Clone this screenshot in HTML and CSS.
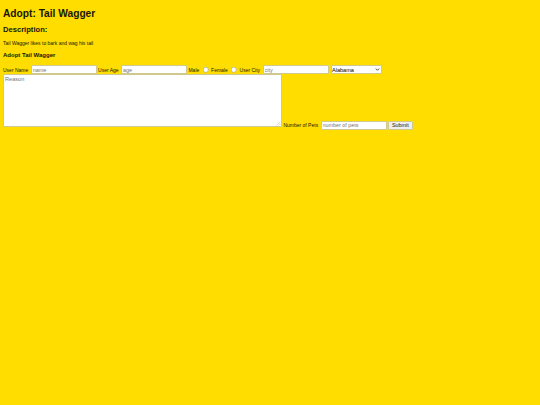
FILE: index.html
```html
<!DOCTYPE html>
<html lang="en">
  <head>
    <meta charset="UTF-8" />
    <meta name="viewport" content="width=device-width, initial-scale=1.0" />
    <title>Adopt: Tail Wagger</title>
    <link rel="stylesheet" href="styles.css">
  </head>
  <body>
    <h1>Adopt: Tail Wagger</h1>
    <h2>Description:</h2>
    <p>Tail Wagger likes to bark and wag his tail</p>
    <h3>Adopt Tail Wagger</h3>
    <form class="adopt-form">
      <div class="form-row">
        <label for="name">User Name</label>
        <input id="name" class="field" type="text" placeholder="name">
        <label for="age">User Age</label>
        <input id="age" class="field" type="text" placeholder="age">
        <label for="male">Male</label>
        <input id="male" class="radio" type="radio" name="gender">
        <label for="female">Female</label>
        <input id="female" class="radio" type="radio" name="gender">
        <label for="city">User City</label>
        <input id="city" class="field" type="text" placeholder="city">
        <span class="state-box">
          <select class="state">
            <option>Alabama</option>
            <option>Alaska</option>
          </select>
          <svg class="state-arrow" viewBox="0 0 6 4"><path d="M0.8 0.8 L3 3 L5.2 0.8" fill="none" stroke="#333" stroke-width="1.2"/></svg>
        </span>
      </div>
      <span class="reason-box">
        <textarea class="reason" placeholder="Reason"></textarea>
        <svg class="reason-grip" viewBox="0 0 5 5"><path d="M0.5 4.5 L4.5 0.5 M2.8 4.5 L4.5 2.8" fill="none" stroke="#b0ad9a" stroke-width="0.5"/></svg>
      </span>
      <label for="pets">Number of Pets</label>
      <input id="pets" class="field" type="text" placeholder="number of pets">
      <button class="submit-btn" type="button">Submit</button>
    </form>
  </body>
</html>
```

FILE: styles.css
```css
/*global*/
* {
  box-sizing: border-box;
}

body {
  margin: 3px;
  background-color: #ffdd00;
  font-family: "Liberation Sans", Arial, sans-serif;
  color: #1a1600;
}

/*headings*/
h1 {
  margin: 5px 0 0;
  font-size: 10.2px;
  line-height: 12px;
}

h2 {
  margin: 5px 0 0;
  font-size: 7.6px;
  line-height: 10px;
}

p {
  margin: 5px 0 0;
  font-size: 5px;
  line-height: 6px;
}

h3 {
  margin: 6px 0 0;
  font-size: 6px;
  line-height: 7px;
}

/*form*/
.adopt-form {
  margin-top: 6px;
  font-size: 5px;
  line-height: 9px;
}

.form-row {
  height: 9px;
}

.form-row > * {
  vertical-align: top;
}

.form-row > label {
  line-height: 10px;
}

.field {
  width: 66px;
  height: 9px;
  margin: 0 0 0 1px;
  padding: 0 1px;
  border: 1px solid #cfc98f;
  border-radius: 1px;
  background-color: #fff;
  font: 5.4px "Liberation Sans", Arial, sans-serif;
}

.radio {
  zoom: 0.43;
  width: 14px;
  height: 14px;
  margin: 4px 2px 0 5px;
}

.state-box {
  position: relative;
  display: inline-block;
  margin-left: 1px;
  line-height: 0;
}

.state {
  appearance: none;
  width: 51px;
  height: 9px;
  padding: 0;
  border: 1px solid #cfc98f;
  border-radius: 1px;
  background-color: #fff;
  font: 5.6px "Liberation Sans", Arial, sans-serif;
}

.state-arrow {
  position: absolute;
  top: 3px;
  right: 2px;
  width: 5px;
  height: 3px;
}

.reason-box {
  position: relative;
  display: inline-block;
  line-height: 0;
}

.reason {
  display: inline-block;
  width: 279px;
  height: 53px;
  margin: 0;
  padding: 1px;
  border: 1px solid #cfc98f;
  border-radius: 1px;
  background-color: #fff;
  font: 5.6px "Liberation Sans", Arial, sans-serif;
  line-height: 7px;
  resize: none;
}

.reason-grip {
  position: absolute;
  right: 1px;
  bottom: 1px;
  width: 5px;
  height: 5px;
}

.submit-btn {
  height: 9px;
  padding: 0 3px;
  border: 1px solid #cfc98f;
  border-radius: 1px;
  background-color: #efefef;
  color: #1a1600;
  font: 5.4px "Liberation Sans", Arial, sans-serif;
}
```
